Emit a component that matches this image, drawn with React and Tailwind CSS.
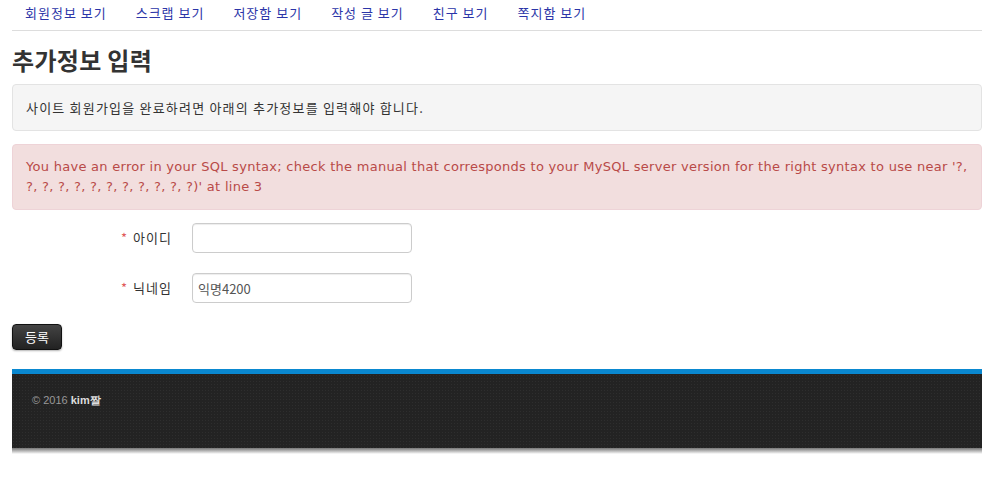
import React from "react";

const kr = { fontFamily: '"Noto Sans CJK KR", "Noto Sans", sans-serif' };

const links = ["회원정보 보기", "스크랩 보기", "저장함 보기", "작성 글 보기", "친구 보기", "쪽지함 보기"];

function Field({ label, value }) {
    return (
        <div className="flex items-center h-[30px] mb-5">
            <label className="w-[180px] pr-[20px] text-right text-[13px] tracking-[1px] text-[#333]">
                <span className="text-[#e05a5a] mr-[5px]">*</span>{label}
            </label>
            <input
                defaultValue={value}
                className="w-[220px] h-[30px] px-[5px] text-[13px] text-[#555] border border-[#ccc] rounded-[4px] shadow-[inset_0_1px_1px_rgba(0,0,0,0.075)] outline-none"
                style={kr}
            />
        </div>
    );
}

export default function App() {
    return (
        <div className="w-[982px] h-[488px] bg-white pl-[12px] overflow-hidden" style={kr}>
            {/* top nav */}
            <nav className="flex h-[31px] border-b border-[#ddd] pl-[13px] items-start">
                {links.map((l) => (
                    <a key={l} href="#" className="text-[13px] tracking-[1px] leading-[25px] text-[#2b35a8] mr-[29px]">{l}</a>
                ))}
            </nav>

            <h1 className="text-[24px] tracking-[0.3px] font-bold text-[#333] leading-[30px] mt-[14px] mb-[9px]">추가정보 입력</h1>

            {/* info well */}
            <div className="h-[47px] bg-[#f5f5f5] border border-[#e3e3e3] rounded-[4px] pl-[13px] flex items-center text-[13px] tracking-[1.2px] text-[#333]">
                사이트 회원가입을 완료하려면 아래의 추가정보를 입력해야 합니다.
            </div>

            {/* error alert */}
            <div
                className="mt-[13px] h-[66px] bg-[#f2dede] border border-[#eed3d7] rounded-[4px] pl-[13px] pr-0 pt-[12px] text-[13px] tracking-[0.28px] leading-[20px] text-[#b94a48] whitespace-nowrap"
                style={{ fontFamily: '"DejaVu Sans", Verdana, sans-serif' }}
            >
                You have an error in your SQL syntax; check the manual that corresponds to your MySQL server version for the right syntax to use near '?,
                <br />
                ?, ?, ?, ?, ?, ?, ?, ?, ?, ?, ?)' at line 3
            </div>

            {/* form */}
            <form className="mt-[13px]">
                <Field label="아이디" value="" />
                <Field label="닉네임" value="익명4200" />
                <button
                    type="button"
                    className="h-[26px] px-[12px] text-[13px] text-white rounded-[4px] bg-gradient-to-b from-[#444] to-[#222] border border-[#111] shadow-[0_1px_2px_rgba(0,0,0,0.3)]"
                >
                    등록
                </button>
            </form>

            {/* footer */}
            <footer className="mt-[19px] border-t-[5px] border-[#0a88d0]">
                <div className="h-[74px] bg-[#232323] bg-[radial-gradient(#2e2e2e_1px,transparent_1px)] bg-[length:3px_3px] pl-[20px] pt-[18px] text-[11px] text-[#999]" style={{ fontFamily: '"Liberation Sans", Arial, sans-serif' }}>
                    © 2016 <span className="text-[#ddd] font-bold">kim짤</span>
                </div>
                <div className="h-[6px] bg-gradient-to-b from-[#777] to-white" />
            </footer>
        </div>
    );
}
